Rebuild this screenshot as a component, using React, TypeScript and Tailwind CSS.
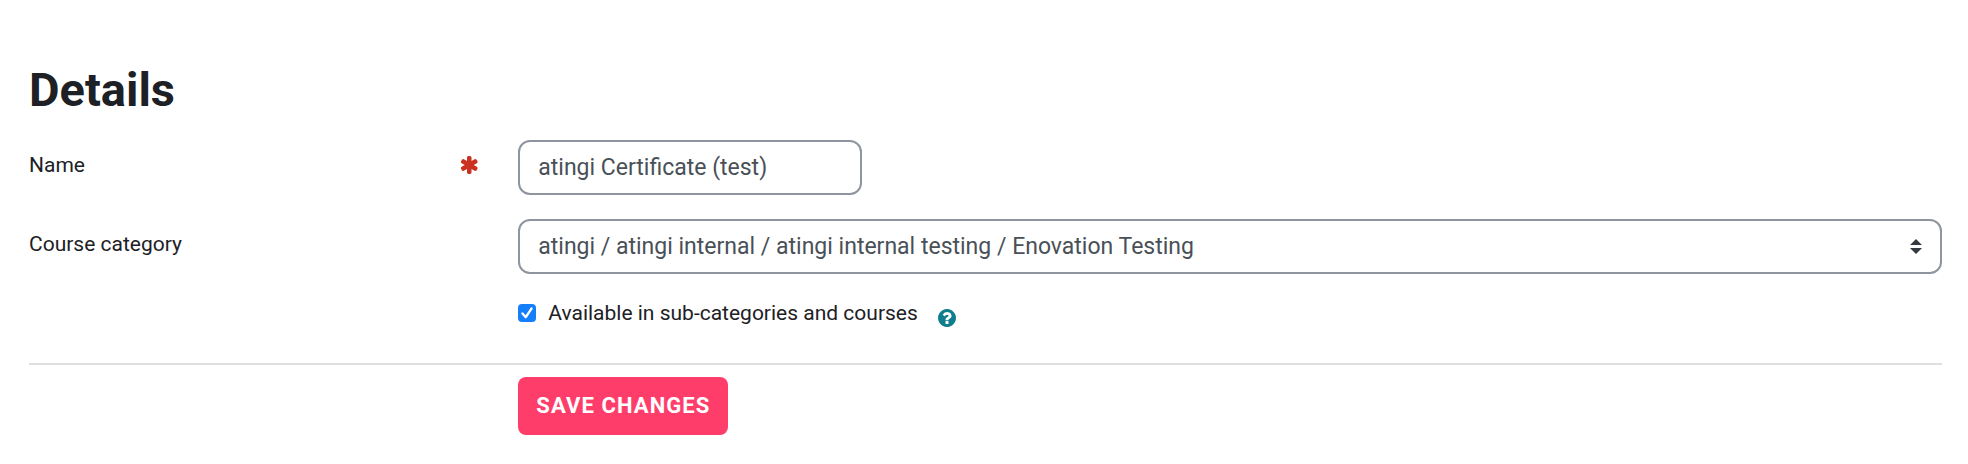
import React, { useState } from 'react';

const categories = ['atingi / atingi internal / atingi internal testing / Enovation Testing'];

const fieldClass =
    'h-[55px] rounded-xl border-2 border-[#8f959e] bg-white px-[18px] text-[23px] leading-8 text-[#495057] outline-none focus:ring-2 focus:ring-sky-300';

function RequiredIcon() {
    return (
        <svg viewBox="128 128 1536 1536" className="size-[18px] fill-[#ca3120]" role="img" aria-label="Required">
            <path d="M1482 1050q46 26 59.5 77.5t-12.5 97.5l-64 110q-26 46-77.5 59.5t-97.5-12.5l-266-153v307q0 52-38 90t-90 38h-128q-52 0-90-38t-38-90v-307l-266 153q-46 26-97.5 12.5t-77.5-59.5l-64-110q-26-46-12.5-97.5t59.5-77.5l266-154-266-154q-46-26-59.5-77.5t12.5-97.5l64-110q26-46 77.5-59.5t97.5 12.5l266 153v-307q0-52 38-90t90-38h128q52 0 90 38t38 90v307l266-153q46-26 97.5-12.5t77.5 59.5l64 110q26 46 12.5 97.5t-59.5 77.5l-266 154z" />
        </svg>
    );
}

function HelpIcon() {
    return (
        <svg viewBox="128 128 1536 1536" className="size-[18px] fill-[#0f7d8c]">
            <path d="M1024 1376v-192q0-14-9-23t-23-9h-192q-14 0-23 9t-9 23v192q0 14 9 23t23 9h192q14 0 23-9t9-23zm256-672q0-88-55.5-163t-138.5-116-170-41q-243 0-371 213-15 24 8 42l132 100q7 6 19 6 16 0 25-12 53-68 86-92 34-24 86-24 48 0 85.5 26t37.5 59q0 38-20 61t-68 45q-63 28-115.5 86.5t-52.5 125.5v36q0 14 9 23t23 9h192q14 0 23-9t9-23q0-19 21.5-49.5t54.5-49.5q32-18 49-28.5t46-35 44.5-48 28-60.5 12.5-81zm384 192q0 209-103 385.5t-279.5 279.5-385.5 103-385.5-103-279.5-279.5-103-385.5 103-385.5 279.5-279.5 385.5-103 385.5 103 279.5 279.5 103 385.5z" />
        </svg>
    );
}

export default function App() {
    const [name, setName] = useState('atingi Certificate (test)');
    const [available, setAvailable] = useState(true);

    return (
        <div className="min-h-screen bg-white pt-16 pr-[26px] pl-[29px] font-['Roboto',sans-serif] text-[21px] leading-8 text-[#1d2125]">
            <h1 className="text-[47px] leading-[52px] font-bold">Details</h1>

            <form onSubmit={(e) => e.preventDefault()}>
                {/* Name */}
                <div className="-mx-[22px] mt-6 flex items-start">
                    <div className="flex w-1/4 items-center justify-between pt-[9px] pr-[17px] pl-[22px]">
                        <label htmlFor="name">Name</label>
                        <RequiredIcon />
                    </div>
                    <div className="w-3/4 px-[22px]">
                        <input
                            id="name"
                            type="text"
                            required
                            value={name}
                            onChange={(e) => setName(e.target.value)}
                            className={`${fieldClass} block w-[344px]`}
                        />
                    </div>
                </div>

                {/* Course category */}
                <div className="-mx-[22px] mt-6 flex items-start">
                    <div className="w-1/4 pt-[9px] pl-[22px]">
                        <label htmlFor="category">Course category</label>
                    </div>
                    <div className="relative w-3/4 px-[22px]">
                        <select id="category" className={`${fieldClass} block w-full appearance-none`}>
                            {categories.map((category) => (
                                <option key={category}>{category}</option>
                            ))}
                        </select>
                        <svg
                            viewBox="0 0 12 15"
                            className="pointer-events-none absolute inset-y-0 right-[42px] my-auto h-[15px] w-3 fill-[#343a40]"
                        >
                            <path d="M0 6 6 0l6 6zM0 9h12l-6 6z" />
                        </svg>
                    </div>
                </div>

                {/* Availability */}
                <div className="-mx-[22px] mt-[23px] flex">
                    <div className="ml-[25%] flex w-3/4 items-center px-[22px]">
                        <label className="flex items-center gap-3">
                            <span className="relative flex size-[18px]">
                                <input
                                    type="checkbox"
                                    checked={available}
                                    onChange={(e) => setAvailable(e.target.checked)}
                                    className="peer size-[18px] appearance-none rounded border border-gray-400 bg-white checked:border-0 checked:bg-[#157efb]"
                                />
                                <svg
                                    viewBox="0 0 18 18"
                                    className="pointer-events-none absolute inset-0 hidden fill-none stroke-white peer-checked:block"
                                >
                                    <path d="M4.5 9.5 7.8 13.2 13.5 4.6" strokeWidth="2.4" strokeLinecap="round" strokeLinejoin="round" />
                                </svg>
                            </span>
                            Available in sub-categories and courses
                        </label>
                        <button type="button" aria-label="Help" className="mt-2.5 ml-5">
                            <HelpIcon />
                        </button>
                    </div>
                </div>

                {/* Actions */}
                <div className="mt-[34px] border-t-2 border-[#dfdfdf] pt-3">
                    <div className="-mx-[22px] flex">
                        <div className="ml-[25%] px-[22px]">
                            <button
                                type="submit"
                                className="h-[58px] rounded-lg bg-[#ff3d6b] px-[18px] text-[22px] font-bold tracking-wider text-white uppercase"
                            >
                                Save changes
                            </button>
                        </div>
                    </div>
                </div>
            </form>
        </div>
    );
}
